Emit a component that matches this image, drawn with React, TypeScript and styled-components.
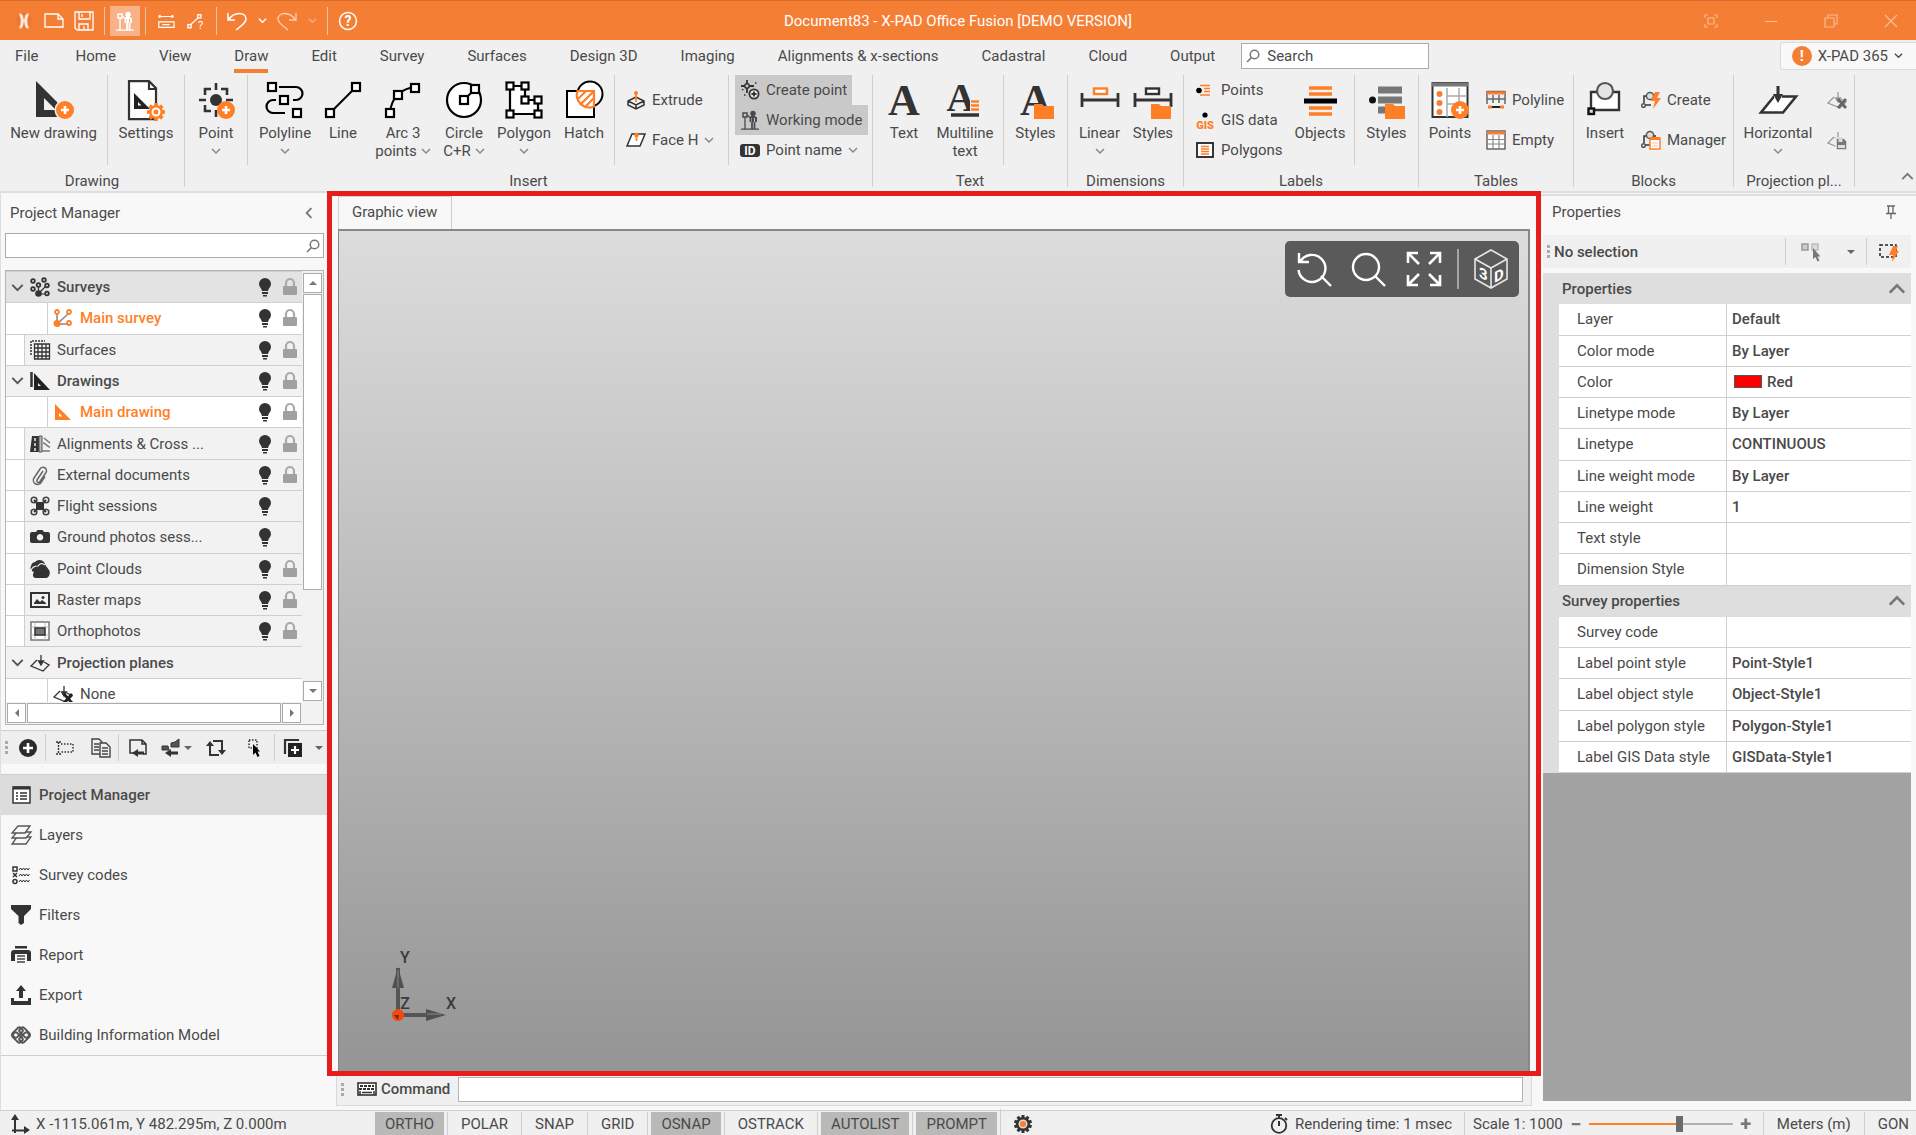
import React from 'react';
import styled, { createGlobalStyle, css } from 'styled-components';

const c = {
  orange: '#f57e35',
  accent: '#ff7f27',
  ink: '#333333',
  text: '#4a4a4a',
  line: '#cfcfcf',
  ribbon: '#f0f0f0',
  panel: '#f8f8f8',
  frame: '#e81c1c',
};

const GlobalStyle = createGlobalStyle`
  *, *::before, *::after { box-sizing: border-box; }
  body { margin: 0; overflow: hidden; }
  body, button, input, table {
    font-family: Roboto, "Liberation Sans", sans-serif;
    font-size: 15px;
    color: ${c.text};
  }
  button { border: 0; padding: 0; background: none; cursor: pointer; }
  svg { display: block; flex: none; overflow: visible; }
  svg text { font-family: inherit; }
`;

/* ---------- icons ---------- */

type IconProps = { size?: number; box?: number; children?: React.ReactNode };

const Svg = ({ size = 20, box = 20, children }: IconProps) => (
  <svg width={size} height={size} viewBox={`0 0 ${box} ${box}`} fill="none" stroke="currentColor" strokeWidth={1.5} aria-hidden="true">
    {children}
  </svg>
);

const Chevron = ({ size = 10, dir = 'down' }: { size?: number; dir?: 'down' | 'up' | 'left' }) => (
  <Svg size={size} box={10}>
    <path d={{ down: 'M1 3 5 7 9 3', up: 'M1 7 5 3 9 7', left: 'M7 1 3 5 7 9' }[dir]} />
  </Svg>
);

const Caret = ({ dir = 'down' }: { dir?: 'down' | 'up' | 'left' | 'right' }) => (
  <Svg size={8} box={8}>
    <path fill="currentColor" stroke="none" d={{ down: 'M0 2H8L4 6Z', up: 'M0 6H8L4 2Z', left: 'M6 0V8L2 4Z', right: 'M2 0V8L6 4Z' }[dir]} />
  </Svg>
);

const Magnifier = ({ size = 14 }: { size?: number }) => (
  <Svg size={size} box={14}>
    <circle cx="8.5" cy="5.5" r="4.3" />
    <path d="M5.4 8.6 1 13" />
  </Svg>
);

const Node = ({ x, y, s = 8 }: { x: number; y: number; s?: number }) => (
  <rect x={x - s / 2} y={y - s / 2} width={s} height={s} fill="#fff" stroke="#000" strokeWidth="2.2" />
);

const PlusBadge = ({ x = 31, y = 30 }: { x?: number; y?: number }) => (
  <g stroke="none">
    <circle cx={x} cy={y} r="9" fill={c.accent} />
    <path d={`M${x - 4} ${y}h8M${x} ${y - 4}v8`} stroke="#fff" strokeWidth="2.6" />
  </g>
);

const FolderBadge = () => <path d="M18 24h8l2 2h10v13H18z" fill={c.accent} stroke="none" />;

const Teeth = ({ x, y, r, w, n = 8, fill }: { x: number; y: number; r: number; w: number; n?: number; fill: string }) => (
  <g fill={fill} stroke="none">
    <circle cx={x} cy={y} r={r * 0.78} />
    {Array.from({ length: n }, (_, i) => (
      <rect key={i} x={x - w / 2} y={y - r} width={w} height={r} transform={`rotate(${(360 / n) * i} ${x} ${y})`} />
    ))}
  </g>
);

const Surveyor = () => (
  <>
    <circle cx="13" cy="3.4" r="2" fill="currentColor" />
    <path d="M13 6v6M10.5 7h5M10.5 7v5M16 7v5" strokeWidth="2" />
    <path d="M12 12v7M14.5 12v7" strokeWidth="1.8" />
    <rect x="3" y="3" width="4" height="4" />
    <path d="M5 7v12M7 5l4 3M1 19.2h18" strokeWidth="1.3" />
  </>
);

function SerifA({ x = 20, y = 35, size = 44 }: { x?: number; y?: number; size?: number }) {
  return (
    <text x={x} y={y} fontSize={size} fontWeight={700} textAnchor="middle" fill={c.ink} stroke="none" style={{ fontFamily: '"Liberation Serif", serif' }}>
      A
    </text>
  );
}

const BigIcons: Record<string, React.ReactNode> = {
  newDrawing: (
    <>
      <path d="M2 1 38 37H2zM10 18v12h12z" fill={c.ink} stroke="none" fillRule="evenodd" />
      <circle cx="31" cy="30" r="10.5" fill={c.ribbon} stroke="none" />
      <PlusBadge />
    </>
  ),
  settings: (
    <>
      <path d="M3 1.2h20l7 7v31H3z" fill="#fff" stroke={c.ink} strokeWidth="2.2" />
      <path d="M23 1v8h8" stroke={c.ink} strokeWidth="2.2" />
      <path d="M8 13 24 29H8zM12 22v3.5h3.5z" fill="#222" stroke="none" fillRule="evenodd" />
      <Teeth x={30} y={32} r={9} w={3.6} fill={c.accent} />
      <circle cx="30" cy="32" r="3.5" fill={c.accent} stroke="#fff" strokeWidth="2" />
    </>
  ),
  point: (
    <>
      <circle cx="20" cy="20" r="6" fill={c.ink} stroke="none" />
      <path d="M20 3v7M20 30v7M3 20h7M30 20h7M15 9h-6v6M25 9h6v6M15 31h-6v-6" stroke={c.ink} strokeWidth="2.6" />
      <PlusBadge x={30} />
    </>
  ),
  polyline: (
    <>
      <path d="M14 7h17a6 6 0 0 1 0 13h-3M20 33H8a6 6 0 0 1 0-13h3" stroke="#000" strokeWidth="2.2" />
      <Node x={7} y={7} /><Node x={19} y={20} /><Node x={32} y={33} />
    </>
  ),
  line: (
    <>
      <path d="M7 33 33 7" stroke="#000" strokeWidth="2" />
      <Node x={7} y={33} /><Node x={33} y={7} />
    </>
  ),
  arc: (
    <>
      <path d="M7 33C8 18 18 8 33 7" stroke="#000" strokeWidth="2" />
      <Node x={7} y={33} /><Node x={15} y={15} /><Node x={32} y={8} />
    </>
  ),
  circle: (
    <>
      <circle cx="20" cy="20" r="17" fill="#fff" stroke="#000" strokeWidth="2.2" />
      <path d="M20 20 31 9" stroke="#000" strokeWidth="2" />
      <Node x={20} y={20} /><Node x={31} y={9} />
    </>
  ),
  polygon: (
    <>
      <path d="M6 6h15v14h13v14H6z" fill="#fff" stroke="#000" strokeWidth="2.2" />
      <Node x={6} y={6} s={7} /><Node x={21} y={6} s={7} /><Node x={21} y={20} s={7} />
      <Node x={34} y={20} s={7} /><Node x={6} y={34} s={7} /><Node x={34} y={34} s={7} />
    </>
  ),
  hatch: (
    <>
      <circle cx="26" cy="14" r="12.5" fill="#fff" stroke="#000" strokeWidth="2" />
      <rect x="3" y="11" width="27" height="26" fill="#fff" stroke="#000" strokeWidth="2" />
      <path d="M13.5 11H30v15.5A12.5 12.5 0 0 1 13.5 11z" fill="#fff" stroke={c.accent} strokeWidth="2.2" />
      <path d="M14 19 22 11M16 25 29 12M21 27 30 18" stroke={c.accent} strokeWidth="2.2" />
    </>
  ),
  text: <SerifA />,
  multiline: (
    <>
      <SerifA x={16} y={31} size={40} />
      <path d="M25 20h9v12h-9z" fill={c.ribbon} stroke="none" />
      <path d="M6 35h28" stroke={c.ink} strokeWidth="3.5" />
      <path d="M26 21.5h8M26 25.5h8M26 29.5h8" stroke={c.accent} strokeWidth="2.4" />
    </>
  ),
  textStyles: (
    <>
      <SerifA />
      <FolderBadge />
    </>
  ),
  linear: (
    <>
      <path d="M2 20h36M2 13v14M38 13v14" stroke={c.ink} strokeWidth="2.8" />
      <rect x="14" y="8.5" width="13" height="5.5" fill="#fff" stroke={c.accent} strokeWidth="2.4" />
    </>
  ),
  dimStyles: (
    <>
      <path d="M2 20h36M2 13v14M38 13v14" stroke={c.ink} strokeWidth="2.8" />
      <rect x="13" y="8.5" width="13" height="5.5" fill="#fff" stroke={c.ink} strokeWidth="2.4" />
      <FolderBadge />
    </>
  ),
  objects: (
    <>
      <path d="M9 8h23M9 14h23M9 28h23M9 34h23" stroke={c.accent} strokeWidth="3.6" />
      <path d="M4 21h33" stroke="#000" strokeWidth="5" />
    </>
  ),
  labelStyles: (
    <>
      <circle cx="5.5" cy="20" r="3.5" fill="#111" stroke="none" />
      <path d="M11 10h24M11 20h24M11 30h8" stroke="#777" strokeWidth="7" />
      <FolderBadge />
    </>
  ),
  tablePoints: (
    <>
      <rect x="2.5" y="3" width="35" height="34" fill="#fff" stroke={c.ink} strokeWidth="2" />
      <path d="M2 4.5h36" stroke="#777" strokeWidth="4" />
      <path d="M17 8v29M17 16h20M17 24h20M29 8v20" stroke="#aaa" strokeWidth="1.5" />
      <g fill={c.orange} stroke="none"><circle cx="9.5" cy="14" r="3" /><circle cx="9.5" cy="23" r="3" /><circle cx="9.5" cy="32" r="3" /></g>
      <PlusBadge x={30} />
    </>
  ),
  blockInsert: (
    <>
      <path d="M6 12h28v18H6z" fill="#fff" stroke={c.ink} strokeWidth="2.4" />
      <circle cx="20" cy="11" r="8" fill="#e4e4e4" stroke="#555" strokeWidth="2.2" />
      <rect x="3.5" y="28.5" width="5.5" height="5.5" fill="#ddd" stroke="#111" strokeWidth="2.4" />
    </>
  ),
  horizontal: (
    <>
      <path d="M16 16.5h22L25 32.5H3z" fill="#fff" stroke={c.ink} strokeWidth="2.6" />
      <path d="M20 6v12" stroke={c.ribbon} strokeWidth="8" />
      <path d="M20 6v10" stroke={c.ink} strokeWidth="3" />
      <path d="M15 14h10l-5 9z" fill={c.ink} stroke="none" />
    </>
  ),
};

const Plane = ({ gray = false }: { gray?: boolean }) => (
  <g stroke={gray ? '#999' : c.ink} strokeWidth="1.3">
    <path d="M7 7 1 13l12 5 6-6-5-3" />
    <path d="M11 2v8M8.5 8l2.500 4 2.500-4z" fill="currentColor" />
  </g>
);

const SmallIcons: Record<string, React.ReactNode> = {
  extrude: (
    <>
      <path d="M10 7 2 11v4l8 4 8-4v-4zM2 11l8 4 8-4M10 15v4" stroke={c.ink} />
      <path d="M10 3v9" stroke={c.accent} strokeWidth="1.8" />
      <circle cx="10" cy="3" r="2" fill={c.accent} stroke="none" />
    </>
  ),
  face: (
    <>
      <path d="M6 4h13l-5 12H1z" fill="#fff" stroke={c.ink} />
      <path d="M10.5 3v8" stroke={c.accent} strokeWidth="1.8" />
      <circle cx="10.5" cy="5" r="2.3" fill={c.accent} stroke="none" />
    </>
  ),
  createPoint: (
    <>
      <path d="M7 0v4M7 8v5M1 6h4M9 6h5" stroke={c.ink} strokeWidth="1.8" />
      <circle cx="7" cy="6" r="2.2" stroke={c.ink} />
      <path d="M2 10l2-1M15 3h2M4 15h3" strokeDasharray="1.5 1.5" stroke={c.ink} />
      <circle cx="14" cy="14" r="4.6" fill="#e4e4e4" stroke={c.ink} strokeWidth="1.8" />
      <path d="M11.5 14h5M14 11.5v5" stroke={c.ink} strokeWidth="1.8" />
    </>
  ),
  working: <Surveyor />,
  id: (
    <>
      <rect x="0" y="4" width="20" height="13" rx="3" fill={c.ink} stroke="none" />
      <text x="10" y="15" fontSize="12" fontWeight={700} textAnchor="middle" fill="#fff" stroke="none">ID</text>
    </>
  ),
  labelPoints: (
    <>
      <circle cx="4" cy="10.5" r="2.8" fill="#000" stroke="none" />
      <path d="M5 5.5h10M9 8.5h6M9 11.5h6M5 15h10" stroke={c.accent} strokeWidth="1.6" />
    </>
  ),
  gis: (
    <>
      <circle cx="10" cy="5" r="2.6" fill="#000" stroke="none" />
      <text x="10" y="19" fontSize="11" fontWeight={900} textAnchor="middle" fill={c.accent} stroke="none">GIS</text>
    </>
  ),
  labelPolygons: (
    <>
      <rect x="2" y="3" width="16" height="14" fill="#fff" stroke="#222" strokeWidth="1.8" />
      <path d="M6 6.5h8M6 9h8M6 11.5h8M6 14h8" stroke={c.accent} strokeWidth="1.4" />
    </>
  ),
  tablePolyline: (
    <>
      <path d="M1 14V1.5h18V14M7 5v8M13 5v8M1 9h18" stroke="#666" />
      <path d="M1 3h18" stroke={c.orange} strokeWidth="3" />
      <path d="M5 17h10" stroke="#222" strokeWidth="2" />
      <path d="M2 17h4M14 17h4" stroke={c.orange} strokeWidth="3" />
    </>
  ),
  tableEmpty: (
    <>
      <rect x="1" y="1" width="18" height="18" fill="#fff" stroke="#666" />
      <path d="M7 5v14M13 5v14M1 9.5h18M1 14h18" stroke="#888" strokeWidth="1.2" />
      <path d="M1 3h18" stroke={c.orange} strokeWidth="3" />
    </>
  ),
  blockCreate: (
    <>
      <path d="M3 13V6h12M3 15h7" stroke={c.ink} />
      <circle cx="9" cy="6" r="3.6" fill="#ddd" stroke="#555" />
      <circle cx="2.5" cy="15.5" r="1.8" fill="#fff" stroke="#555" />
      <path d="M14 2h5l-3 6h4L12 19l2-8h-4z" fill={c.accent} stroke="none" />
    </>
  ),
  blockManager: (
    <>
      <path d="M3 13V6h12M3 15h7" stroke={c.ink} />
      <circle cx="9" cy="5" r="3.6" fill="#ddd" stroke="#555" />
      <circle cx="2.5" cy="15.5" r="1.8" fill="#fff" stroke="#555" />
      <rect x="9" y="8" width="10" height="11" fill="#fff" stroke={c.accent} />
      <path d="M9 8.5h10" stroke={c.accent} strokeWidth="3" />
      <path d="M11 13h6M11 16h6" stroke="#f9c49d" strokeWidth="1" />
    </>
  ),
  planeDelete: (
    <>
      <g color="#999"><Plane gray /></g>
      <path d="M11 9l8 9M19 9l-8 9" stroke="#666" strokeWidth="2.8" />
    </>
  ),
  planeSave: (
    <>
      <g color="#999"><Plane gray /></g>
      <path d="M9 8h8l3 3v9H9z" fill="#777" stroke={c.ribbon} />
      <path d="M11.5 9h4v3h-4zM11 15h7v3h-7z" fill="#ddd" stroke="none" />
    </>
  ),
  surveys: (
    <g strokeWidth="1.8" stroke={c.ink}>
      <circle cx="3" cy="4" r="1.8" /><circle cx="14" cy="3" r="1.8" /><circle cx="3" cy="12" r="1.8" />
      <circle cx="8.5" cy="8" r="1.8" /><circle cx="17" cy="8.5" r="1.8" />
      <circle cx="8.5" cy="16.5" r="2.4" fill={c.ink} /><circle cx="17" cy="16.5" r="1.8" />
      <path d="M8.5 9v6M10 15l6-6M10 17h6" strokeWidth="1.2" />
    </g>
  ),
  mainSurvey: (
    <g stroke={c.accent} strokeWidth="1.8">
      <path d="M4 5v11l11-10M4 16h11" stroke="#888" strokeWidth="1.5" />
      <circle cx="4" cy="4" r="2" fill="#fff" /><circle cx="16" cy="4" r="2" fill="#fff" /><circle cx="16" cy="15" r="2" fill="#fff" />
      <circle cx="4" cy="15.5" r="2.6" fill={c.accent} />
    </g>
  ),
  surfaces: (
    <>
      <path d="M1 15V1h14" stroke={c.ink} strokeDasharray="2 1" />
      <path d="M4.5 4h15v15h-15zM8 4v15M12 4v15M16 4v15M4 8h15M4 12h15M4 16h15" stroke={c.ink} strokeWidth="1.3" />
    </>
  ),
  drawings: (
    <>
      <path d="M1.5 1v15" stroke={c.ink} strokeWidth="2.5" />
      <path d="M4 2 20 19H4zM8 12v3h3z" fill="#222" stroke="none" fillRule="evenodd" />
    </>
  ),
  mainDrawing: <path d="M2 2 18 18H2zM6 11v3.5h3.5z" fill={c.accent} stroke="none" fillRule="evenodd" />,
  alignments: (
    <>
      <path d="M2 2h7v16H0z" fill={c.ink} stroke="none" />
      <path d="M5 4v13" stroke="#eee" strokeDasharray="3 2" />
      <path d="M9 2h3v16H9z" fill="#bbb" stroke="#555" strokeWidth="1" />
      <path d="M14 4l6 5M13 9c3 0 4 4 7 4M12 17h8" stroke="#777" />
    </>
  ),
  clip: <path d="M13 6 7 15a1.5 1.5 0 0 0 3 1.5l6-9A3.3 3.3 0 0 0 10 4L4 13a4 4 0 0 0 7 4.5l4-6" stroke="#666" strokeWidth="1.5" />,
  drone: (
    <>
      <rect x="6" y="6" width="8" height="8" fill={c.ink} stroke="none" />
      <path d="M4 4l12 12M16 4 4 16" stroke={c.ink} strokeWidth="2" />
      <g stroke="#444" strokeWidth="1.6"><circle cx="4" cy="4" r="2.8" /><circle cx="16" cy="4" r="2.8" /><circle cx="4" cy="16" r="2.8" /><circle cx="16" cy="16" r="2.8" /></g>
    </>
  ),
  camera: <path d="M2 5h4l1.5-2h5L14 5h4a2 2 0 0 1 2 2v7a2 2 0 0 1-2 2H2a2 2 0 0 1-2-2V7a2 2 0 0 1 2-2zM10 7a3.3 3.3 0 1 0 .01 0z" fill={c.ink} stroke="none" fillRule="evenodd" />,
  cloud: (
    <>
      <path d="M4 13A4 4 0 0 1 1 7a5 5 0 0 1 4-4 6 6 0 0 1 9 0l2 4 3 4c2 3 0 8-3 8H6c-3 0-4-3-2-6z" fill={c.ink} stroke="none" />
      <path d="M1 12c1-5 5-5 7-5 2-3 5-3 7-1" stroke="#f2f2f2" strokeWidth="1.2" />
    </>
  ),
  raster: (
    <>
      <rect x="1" y="3" width="18" height="14" stroke={c.ink} strokeWidth="2" />
      <path d="M4 14v-1l3-4 3 3 2-2 4 3v1z" fill={c.ink} stroke="none" /><circle cx="13" cy="7.5" r="1.5" fill={c.ink} stroke="none" />
    </>
  ),
  ortho: (
    <>
      <rect x="1" y="1" width="18" height="18" fill="#fff" stroke="#777" />
      <path d="M5 1v18M15 1v18M1 6h18M1 14h18" stroke="#bbb" strokeWidth="1" />
      <rect x="5" y="7" width="10" height="7" fill="#777" stroke={c.ink} />
    </>
  ),
  plane: <Plane />,
  none: (
    <>
      <Plane />
      <path d="M11 10l8 9M19 10l-8 9" stroke="#222" strokeWidth="2.8" />
    </>
  ),
  bulb: <path d="M10 1a6 6 0 0 0-6 6c0 3 2.5 4 3 7h6c.5-3 3-4 3-7a6 6 0 0 0-6-6zM7 15h6v2H7zM8 18h4v1.500H8z" fill={c.ink} stroke="none" />,
  lock: (
    <>
      <path d="M6 9V6a4 4 0 0 1 8 0v3" stroke="#aaa" strokeWidth="2.2" />
      <rect x="3" y="9" width="14" height="9" rx="1" fill="#a0a0a0" stroke="none" />
    </>
  ),
  add: (
    <>
      <circle cx="10" cy="10" r="9" fill="#2b2b2b" stroke="none" />
      <path d="M5 10h10M10 5v10" stroke="#fff" strokeWidth="2.6" />
    </>
  ),
  rename: (
    <>
      <path d="M1 4h5M3.5 4v12M1 16h5" stroke={c.ink} strokeWidth="1.4" strokeDasharray="2 1" />
      <path d="M6 6h12v8H6" stroke={c.ink} strokeDasharray="1.5 1.5" />
    </>
  ),
  copy: (
    <>
      <path d="M1 1h7l3 3v12H1zM3 6h5M3 9h5M3 12h5" stroke="#444" strokeWidth="1.4" />
      <path d="M9 5h6l4 4v10H9z" fill="#f0f0f0" stroke="#444" strokeWidth="1.4" />
      <path d="M11 10h6M11 13h6M11 16h6" stroke="#444" strokeWidth="1.4" />
    </>
  ),
  importDoc: (
    <>
      <path d="M6 15H2V2h12l4 4v10h-3M14 2v4h4" stroke="#333" />
      <path d="M4 15l6-4v2.500h6v3h-6V19z" fill={c.ink} stroke="none" />
    </>
  ),
  importAll: (
    <>
      <path d="M1 8h6l1 4H1zM10 5l4-1 4-3v8h-8z" fill="#555" stroke={c.ink} strokeWidth="1" />
      <path d="M4 15l6-4v2.500h7v3h-7V19z" fill={c.ink} stroke="none" />
    </>
  ),
  swap: (
    <>
      <path d="M4 6v11h9M16 14V3H7" stroke={c.ink} strokeWidth="2" />
      <path d="M0 8h8L4 3zM12 12h8l-4 5z" fill={c.ink} stroke="none" />
    </>
  ),
  pick: (
    <>
      <rect x="4" y="2" width="8" height="8" stroke={c.ink} strokeDasharray="1.5 1.5" />
      <path d="M8 6v11l2.500-2.500L12.500 19l2-1-2-4.500H15z" fill="#000" stroke="none" />
    </>
  ),
  duplicate: (
    <>
      <path d="M2 16V2h14" stroke={c.ink} strokeWidth="2.2" />
      <rect x="5" y="5" width="14" height="14" fill="#222" stroke="none" />
      <path d="M8 12h8M12 8v8" stroke="#fff" strokeWidth="2.2" />
    </>
  ),
  manager: (
    <>
      <rect x="2" y="2" width="17" height="16" fill="#fff" stroke={c.ink} />
      <path d="M2 3h17" stroke={c.ink} strokeWidth="3" />
      <path d="M5 8h2M5 11h2M5 14h2M9 8h7M9 11h7M9 14h7" stroke={c.ink} />
    </>
  ),
  layers: (
    <g fill={c.panel} stroke="#555" strokeWidth="1.3">
      <path d="M6 12h14l-5 7H1z" /><path d="M6 7h14l-5 6H1z" /><path d="M7 1h12l-5 7H1z" />
    </g>
  ),
  codes: (
    <>
      <rect x="2" y="2" width="4" height="4" stroke={c.ink} /><path d="M2 8l4 4M6 8l-4 4" stroke={c.ink} /><circle cx="4" cy="16.5" r="2" stroke={c.ink} />
      <path d="M8 5l1.500-2 1.500 2 1.500-2 1.500 2 1.500-2 1.500 2 1.500-2M8 11l1.500-2 1.500 2 1.500-2 1.500 2 1.500-2 1.500 2 1.500-2M8 17l1.500-2 1.500 2 1.500-2 1.500 2 1.500-2 1.500 2 1.500-2" stroke={c.ink} strokeWidth="1" />
    </>
  ),
  filter: <path d="M0 0h20v4l-7 7v7l-3 2-2.500-2v-7L0 4z" fill={c.ink} stroke="none" />,
  report: (
    <>
      <path d="M4 1h12v2.500H4zM3 5h14a3 3 0 0 1 3 3v8h-4V9H4v7H0V8a3 3 0 0 1 3-3z" fill={c.ink} stroke="none" />
      <path d="M6 11h8M6 14h8M6 17h8" stroke="#444" strokeWidth="1.3" />
    </>
  ),
  exportUp: <path d="M10 0l5 6h-3v7H8V6H5zM0 13h3v3h14v-3h3v7H0z" fill={c.ink} stroke="none" />,
  bim: (
    <g stroke="#555" strokeWidth="2">
      <rect x="3.500" y="2" width="6" height="11" rx="2" transform="rotate(45 6.500 7.500)" /><rect x="10.500" y="2" width="6" height="11" rx="2" transform="rotate(-45 13.500 7.500)" />
      <rect x="3.500" y="7" width="6" height="11" rx="2" transform="rotate(-45 6.500 12.500)" /><rect x="10.500" y="7" width="6" height="11" rx="2" transform="rotate(45 13.500 12.500)" />
    </g>
  ),
  newDoc: <path d="M1 3h13l5 5v8H1zM14 3v5h5" stroke="#fff" strokeWidth="1.3" />,
  save: <path d="M1 1h18v18H3l-2-2zM5 1v7h11V1M5 19v-6h9v6M10 19v-4M8 3v3" stroke="#fff" strokeWidth="1.3" />,
  measure: (
    <>
      <path d="M3 5h14M2 11h17v6H2zM6 14h8" stroke="#fff" strokeWidth="1.3" />
      <circle cx="3" cy="5" r="1.6" fill="#fff" stroke="none" /><circle cx="17" cy="5" r="1.6" fill="#fff" stroke="none" />
    </>
  ),
  query: (
    <>
      <path d="M3 15 14 5" stroke="#fff" strokeWidth="1.3" /><rect x="1" y="14" width="3.5" height="3.5" fill={c.orange} stroke="#fff" /><rect x="12" y="3" width="3.5" height="3.5" fill={c.orange} stroke="#fff" />
      <text x="15" y="19" fontSize="13" textAnchor="middle" fill="#fff" stroke="none">?</text>
    </>
  ),
  undo: <path d="M1 2v7h7M1.5 9C7 0 19 1 19 8c0 4-4 6-10 11" stroke="#fff" strokeWidth="1.5" />,
  redo: <path d="M19 2v7h-7M18.5 9C13 0 1 1 1 8c0 4 4 6 10 11" stroke="#fbd0b0" strokeWidth="1.3" />,
  help: (
    <>
      <circle cx="10" cy="10" r="8.5" stroke="#fff" />
      <text x="10" y="15" fontSize="14" fontWeight={700} textAnchor="middle" fill="#fff" stroke="none">?</text>
    </>
  ),
  logo: (
    <>
      <circle cx="10" cy="10" r="9" fill="#e67a35" stroke="none" />
      <path d="M5 3c2 0 3 3 3 7s-1 7-3 7M15 3c-2 0-3 3-3 7s1 7 3 7" stroke="#fde6d6" strokeWidth="3.4" />
      <path d="M8 10h4" stroke="#fde6d6" strokeWidth="2" />
    </>
  ),
  keyboard: (
    <>
      <rect x="1" y="4" width="18" height="12" fill="#fff" stroke={c.ink} strokeWidth="1.6" />
      <path d="M3 7h14M2 10h16" stroke={c.ink} strokeWidth="2.2" strokeDasharray="3 1" /><path d="M5 13.5h10M3 12v4M17 12v4" stroke={c.ink} />
    </>
  ),
  axes: (
    <>
      <path d="M5 19V3M2 16.5h16" stroke={c.ink} strokeWidth="2" />
      <path d="M1 6l4-6 4 6zM14 12l6 4-6 4z" fill={c.ink} stroke="none" />
    </>
  ),
  gear: (
    <>
      <Teeth x={10} y={10} r={9} w={3} n={10} fill="#333" />
      <circle cx="10" cy="10" r="3.8" fill={c.accent} stroke="#ddd" />
    </>
  ),
  timer: (
    <>
      <circle cx="10" cy="11.5" r="7.3" stroke={c.ink} strokeWidth="1.8" />
      <path d="M7 1h6M10 1v3M10 7v5M16 4l2 2" stroke={c.ink} strokeWidth="2" />
    </>
  ),
  selectMany: (
    <>
      <rect x="1" y="2" width="6" height="6" stroke="#999" fill="#ccc" /><rect x="11" y="2" width="6" height="6" stroke="#bbb" fill="#ddd" />
      <path d="M12 6v11l2.500-2 2 4.500 2-1-2-4h3z" fill="#777" stroke="none" />
    </>
  ),
  quickSelect: (
    <>
      <rect x="1" y="3" width="16" height="12" stroke="#222" strokeDasharray="3 2" fill="#eee" />
      <path d="M14 4h5l-2 5h3l-7 11 1-7h-4z" fill={c.accent} stroke="none" />
    </>
  ),
  pin: <path d="M6 4h8M7.5 4v7M12 4v7M5 11.5h10M10 12v5" stroke="#666" strokeWidth="1.3" />,
  focus: <path d="M4 7V4h3M13 4h3v3M16 13v3h-3M7 16H4v-3M7 7h6v6H7z" strokeWidth="1.2" />,
  minimize: <path d="M4 10.5h12" strokeWidth="1.2" />,
  restore: <path d="M4 7h9v9H4zM7 7V4h9v9h-3" strokeWidth="1.2" />,
  close: <path d="M4 4l12 12M16 4 4 16" strokeWidth="1.4" />,
};

const Small = ({ name, size = 20 }: { name: string; size?: number }) => <Svg size={size}>{SmallIcons[name]}</Svg>;
const Big = ({ name }: { name: string }) => <Svg size={40} box={40}>{BigIcons[name]}</Svg>;

/* ---------- shell ---------- */

const Shell = styled.div`
  display: flex;
  flex-direction: column;
  height: 100vh;
  background: ${c.panel};
`;

const TitleBar = styled.header`
  display: grid;
  grid-template-columns: 1fr auto 1fr;
  align-items: center;
  height: 40px;
  flex: none;
  background: ${c.orange};
  border-top: 1px solid #d96c2c;
  color: #fff;
`;
const QuickBar = styled.div`
  display: flex;
  align-items: center;
  padding-left: 9px;
`;
const QuickButton = styled.button<{ $active?: boolean; $narrow?: boolean; $dim?: boolean }>`
  display: grid;
  place-items: center;
  width: ${p => (p.$narrow ? 20 : 30)}px;
  height: 30px;
  color: #fff;
  opacity: ${p => (p.$dim ? 0.35 : 1)};
  background: ${p => (p.$active ? '#f8b288' : 'none')};
`;
const QuickDivider = styled.span`
  width: 1px;
  height: 28px;
  margin: 0 5px;
  background: #e9c3a9;
`;
const Title = styled.h1`
  margin: 0;
  font-size: 15px;
  font-weight: 400;
`;
const WindowButtons = styled.div`
  display: flex;
  justify-content: flex-end;
  gap: 10px;
`;
const WindowButton = styled.button`
  display: grid;
  place-items: center;
  width: 50px;
  height: 30px;
  color: #fab98f;
`;

const TabBar = styled.nav`
  display: flex;
  align-items: center;
  height: 35px;
  flex: none;
  padding-left: 15px;
  background: ${c.ribbon};
`;
const TabList = styled.div`
  display: flex;
  gap: 43px;
  margin-right: 26px;
`;
const Tab = styled.button<{ $active?: boolean }>`
  height: 30px;
  line-height: 24px;
  border-bottom: 4px solid ${p => (p.$active ? c.orange : 'transparent')};
  white-space: nowrap;
`;
const FileTab = styled(Tab)`
  margin-right: -6px;
`;
const SearchBox = styled.label`
  display: flex;
  align-items: center;
  gap: 7px;
  width: 188px;
  height: 26px;
  margin-bottom: 4px;
  padding-left: 4px;
  background: #fff;
  border: 1px solid #ababab;
  color: #777;
`;
const SearchInput = styled.input`
  flex: 1;
  min-width: 0;
  height: 22px;
  padding: 0;
  border: 0;
  outline: 0;
  background: none;
  &::placeholder { color: ${c.text}; opacity: 1; }
`;
const Account = styled.button`
  display: flex;
  align-items: center;
  gap: 6px;
  height: 28px;
  margin: 0 0 4px auto;
  padding: 0 13px 0 11px;
  background: ${c.panel};
  border: 1px solid #dadada;
  border-right: 0;
  border-radius: 3px 0 0 3px;
`;
const AccountAlert = styled.span`
  display: grid;
  place-items: center;
  width: 20px;
  height: 20px;
  border-radius: 50%;
  background: ${c.orange};
  color: #fff;
  font-weight: 700;
`;

/* ---------- ribbon ---------- */

const RibbonBar = styled.div`
  display: flex;
  height: 116px;
  flex: none;
  background: ${c.ribbon};
`;
const Group = styled.section`
  display: flex;
  flex-direction: column;
  height: 112px;
  border-right: 1px solid ${c.line};
`;
const GroupBody = styled.div`
  display: flex;
  height: 90px;
  flex: none;
`;
const GroupLabel = styled.div`
  padding-top: 5px;
  line-height: 22px;
  text-align: center;
  white-space: nowrap;
`;
const Section = styled.div<{ $pad?: string }>`
  display: flex;
  padding: ${p => p.$pad || '0'};
  &:not(:last-child) { border-right: 1px solid ${c.line}; }
`;
const BigBtn = styled.button<{ $w: number }>`
  display: flex;
  flex-direction: column;
  align-items: center;
  width: ${p => p.$w}px;
  padding-top: 5px;
  line-height: 18px;
`;
const BigLabel = styled.span`
  margin-top: 4px;
  text-align: center;
  white-space: pre;
`;
const DropMark = styled.span<{ $place: 'below' | 'inline' | 'beside' }>`
  display: ${p => (p.$place === 'inline' ? 'inline-block' : 'block')};
  margin: ${p => ({ below: '4px 0 0', inline: '0 0 0 4px', beside: '0' }[p.$place])};
  color: #888;
`;
const SmallColumn = styled.div<{ $w: number }>`
  display: flex;
  flex-direction: column;
  justify-content: center;
  align-items: flex-start;
  width: ${p => p.$w}px;
`;
const SmallBtn = styled.button<{ $tall?: boolean; $on?: boolean }>`
  display: flex;
  align-items: center;
  gap: 6px;
  height: ${p => (p.$tall ? 40 : 30)}px;
  padding: 0 5px;
  white-space: nowrap;
  background: ${p => (p.$on ? '#c9c9c9' : 'none')};
`;
const CollapseRibbon = styled.button`
  align-self: flex-end;
  margin-left: auto;
  padding: 0 2px 8px 0;
  color: #777;
`;

type BigDef = { icon: string; label: string; w: number; drop?: 'below' | 'inline' };
const BigButton = ({ icon, label, w, drop }: BigDef) => (
  <BigBtn $w={w}>
    <Big name={icon} />
    <BigLabel>
      {label}
      {drop === 'inline' && <DropMark $place="inline"><Chevron /></DropMark>}
    </BigLabel>
    {drop === 'below' && <DropMark $place="below"><Chevron /></DropMark>}
  </BigBtn>
);

type SmallDef = { icon: string; label?: string; drop?: boolean; on?: boolean; title?: string };
const SmallButtons = ({ w, items }: { w: number; items: SmallDef[] }) => (
  <SmallColumn $w={w}>
    {items.map(i => (
      <SmallBtn key={i.icon} $tall={items.length === 2} $on={i.on} aria-label={i.title}>
        <Small name={i.icon} />
        {i.label}
        {i.drop && <DropMark $place="beside"><Chevron /></DropMark>}
      </SmallBtn>
    ))}
  </SmallColumn>
);

const Ribbon = () => (
  <RibbonBar>
    <Group>
      <GroupBody>
        <Section><BigButton icon="newDrawing" label="New drawing" w={107} /></Section>
        <Section><BigButton icon="settings" label="Settings" w={76} /></Section>
      </GroupBody>
      <GroupLabel>Drawing</GroupLabel>
    </Group>
    <Group>
      <GroupBody>
        <Section><BigButton icon="point" label="Point" w={62} drop="below" /></Section>
        <Section $pad="0 8px 0 0">
          <BigButton icon="polyline" label="Polyline" w={74} drop="below" />
          <BigButton icon="line" label="Line" w={42} />
          <BigButton icon="arc" label={'Arc 3\npoints'} w={78} drop="inline" />
          <BigButton icon="circle" label={'Circle\nC+R'} w={44} drop="inline" />
          <BigButton icon="polygon" label="Polygon" w={76} drop="below" />
          <BigButton icon="hatch" label="Hatch" w={44} />
        </Section>
        <Section $pad="0 0 0 6px">
          <SmallButtons w={107} items={[{ icon: 'extrude', label: 'Extrude' }, { icon: 'face', label: 'Face H', drop: true }]} />
        </Section>
        <Section $pad="0 0 0 6px">
          <SmallButtons w={137} items={[
            { icon: 'createPoint', label: 'Create point', on: true },
            { icon: 'working', label: 'Working mode', on: true },
            { icon: 'id', label: 'Point name', drop: true },
          ]} />
        </Section>
      </GroupBody>
      <GroupLabel>Insert</GroupLabel>
    </Group>
    <Group>
      <GroupBody>
        <Section $pad="0 8px 0 0">
          <BigButton icon="text" label="Text" w={62} />
          <BigButton icon="multiline" label={'Multiline\ntext'} w={60} />
        </Section>
        <Section><BigButton icon="textStyles" label="Styles" w={63} /></Section>
      </GroupBody>
      <GroupLabel>Text</GroupLabel>
    </Group>
    <Group>
      <GroupBody>
        <Section $pad="0 8px 0 0">
          <BigButton icon="linear" label="Linear" w={63} drop="below" />
          <BigButton icon="dimStyles" label="Styles" w={44} />
        </Section>
      </GroupBody>
      <GroupLabel>Dimensions</GroupLabel>
    </Group>
    <Group>
      <GroupBody>
        <Section $pad="0 4px 0 6px">
          <SmallButtons w={100} items={[
            { icon: 'labelPoints', label: 'Points' },
            { icon: 'gis', label: 'GIS data' },
            { icon: 'labelPolygons', label: 'Polygons' },
          ]} />
          <BigButton icon="objects" label="Objects" w={60} />
        </Section>
        <Section><BigButton icon="labelStyles" label="Styles" w={63} /></Section>
      </GroupBody>
      <GroupLabel>Labels</GroupLabel>
    </Group>
    <Group>
      <GroupBody>
        <Section>
          <BigButton icon="tablePoints" label="Points" w={62} />
          <SmallButtons w={92} items={[{ icon: 'tablePolyline', label: 'Polyline' }, { icon: 'tableEmpty', label: 'Empty' }]} />
        </Section>
      </GroupBody>
      <GroupLabel>Tables</GroupLabel>
    </Group>
    <Group>
      <GroupBody>
        <Section>
          <BigButton icon="blockInsert" label="Insert" w={62} />
          <SmallButtons w={97} items={[{ icon: 'blockCreate', label: 'Create' }, { icon: 'blockManager', label: 'Manager' }]} />
        </Section>
      </GroupBody>
      <GroupLabel>Blocks</GroupLabel>
    </Group>
    <Group>
      <GroupBody>
        <Section>
          <BigButton icon="horizontal" label="Horizontal" w={88} drop="below" />
          <SmallButtons w={32} items={[{ icon: 'planeDelete', title: 'Remove plane' }, { icon: 'planeSave', title: 'Save plane' }]} />
        </Section>
      </GroupBody>
      <GroupLabel>Projection pl...</GroupLabel>
    </Group>
    <CollapseRibbon aria-label="Collapse ribbon"><Chevron size={13} dir="up" /></CollapseRibbon>
  </RibbonBar>
);

/* ---------- left panel ---------- */

const Body = styled.div`
  display: flex;
  flex: 1;
  min-height: 0;
`;
const LeftPanel = styled.aside`
  display: flex;
  flex-direction: column;
  width: 327px;
  flex: none;
  border-top: 2px solid #dedede;
  border-left: 1px solid #dedede;
`;
const PanelHead = styled.div`
  display: flex;
  align-items: center;
  justify-content: space-between;
  height: 40px;
  padding: 0 12px 0 9px;
  color: ${c.text};
`;
const PlainButton = styled.button`
  display: grid;
  place-items: center;
  color: #777;
`;
const TreeSearch = styled(SearchBox)`
  width: auto;
  height: 25px;
  margin: 0 3px 12px 4px;
  padding: 0 3px;
`;
const TreeBox = styled.div`
  display: grid;
  grid-template-columns: 1fr 21px;
  grid-template-rows: 431px 22px;
  margin: 0 3px 5px 4px;
  border: 1px solid #b4b4b4;
  background: #f2f2f2;
`;
const TreeView = styled.div`
  overflow: hidden;
  border-top: 1px solid ${c.line};
`;
const TreeRows = styled.div`
  display: grid;
  grid-auto-rows: 1fr;
  height: 438px;
`;
const Row = styled.div<{ $kind: 'leaf' | 'parent' | 'child'; $selected?: boolean }>`
  display: grid;
  grid-template-columns: ${p => (p.$kind === 'child' ? 42 : 19)}px 20px 1fr 20px 20px;
  column-gap: 5px;
  align-items: center;
  padding-right: 2px;
  border-bottom: 1px solid ${c.line};
  background: ${p => (p.$selected ? '#e3e3e3' : p.$kind === 'child' ? '#fff' : '#f2f2f2')};
  font-weight: ${p => (p.$kind === 'parent' ? 500 : 400)};
`;
const Gutter = styled.span<{ $lined?: boolean }>`
  display: grid;
  place-items: center;
  align-self: stretch;
  padding-left: 4px;
  color: #555;
  ${p => p.$lined && css`
    background: #fff;
    border-right: 1px solid ${c.line};
  `}
`;
const RowText = styled.span<{ $hot?: boolean }>`
  padding-left: 2px;
  white-space: nowrap;
  ${p => p.$hot && css`
    color: ${c.accent};
    font-weight: 500;
  `}
`;
const ScrollTrack = styled.div<{ $horizontal?: boolean }>`
  display: flex;
  flex-direction: ${p => (p.$horizontal ? 'row' : 'column')};
  gap: 1px;
  padding: ${p => (p.$horizontal ? '1px' : '2px 1px 1px')};
`;
const ScrollButton = styled(PlainButton)`
  width: 19px;
  height: 20px;
  flex: none;
  background: #fff;
  border: 1px solid #ababab;
`;
const ScrollThumb = styled.div<{ $grow: number }>`
  flex: ${p => p.$grow};
  background: #fff;
  border: 1px solid #ababab;
`;
const ScrollGap = styled.div<{ $grow: number }>`
  flex: ${p => p.$grow};
`;
const TreeTools = styled.div`
  display: flex;
  align-items: center;
  height: 34px;
  flex: none;
  background: #eeeeee;
  border-top: 1px solid ${c.line};
`;
const Tool = styled.button<{ $w?: number }>`
  display: flex;
  align-items: center;
  justify-content: center;
  gap: 3px;
  width: ${p => p.$w || 33}px;
  height: 30px;
  color: #666;
`;
const ToolDivider = styled.span`
  width: 1px;
  height: 27px;
  background: ${c.line};
`;
const Grip = styled.span`
  width: 3px;
  height: 13px;
  margin: 0 4px;
  background: repeating-linear-gradient(#aaa 0 3px, transparent 3px 5px);
`;
const NavList = styled.nav`
  display: flex;
  flex-direction: column;
  margin-top: 10px;
  border-top: 1px solid ${c.line};
  border-bottom: 1px solid ${c.line};
`;
const NavItem = styled.button<{ $active?: boolean }>`
  display: flex;
  align-items: center;
  gap: 8px;
  height: 40px;
  padding-left: 10px;
  background: ${p => (p.$active ? '#dcdcdc' : 'none')};
  font-weight: ${p => (p.$active ? 500 : 400)};
`;

type TreeRow = { label: string; icon: string; kind?: 'parent' | 'child'; selected?: boolean; hot?: boolean; bulb?: boolean; lock?: boolean };
const tree: TreeRow[] = [
  { label: 'Surveys', icon: 'surveys', kind: 'parent', selected: true },
  { label: 'Main survey', icon: 'mainSurvey', kind: 'child', hot: true },
  { label: 'Surfaces', icon: 'surfaces' },
  { label: 'Drawings', icon: 'drawings', kind: 'parent' },
  { label: 'Main drawing', icon: 'mainDrawing', kind: 'child', hot: true },
  { label: 'Alignments & Cross ...', icon: 'alignments' },
  { label: 'External documents', icon: 'clip' },
  { label: 'Flight sessions', icon: 'drone', lock: false },
  { label: 'Ground photos sess...', icon: 'camera', lock: false },
  { label: 'Point Clouds', icon: 'cloud' },
  { label: 'Raster maps', icon: 'raster' },
  { label: 'Orthophotos', icon: 'ortho' },
  { label: 'Projection planes', icon: 'plane', kind: 'parent', bulb: false, lock: false },
  { label: 'None', icon: 'none', kind: 'child', bulb: false, lock: false },
];

const nav = [
  ['manager', 'Project Manager'],
  ['layers', 'Layers'],
  ['codes', 'Survey codes'],
  ['filter', 'Filters'],
  ['report', 'Report'],
  ['exportUp', 'Export'],
  ['bim', 'Building Information Model'],
];

const ProjectPanel = () => (
  <LeftPanel>
    <PanelHead>
      Project Manager
      <PlainButton aria-label="Collapse panel"><Chevron size={12} dir="left" /></PlainButton>
    </PanelHead>
    <TreeSearch>
      <SearchInput aria-label="Search the project" />
      <Magnifier />
    </TreeSearch>
    <TreeBox>
      <TreeView>
        <TreeRows role="tree">
          {tree.map(r => (
            <Row key={r.label} role="treeitem" $kind={r.kind || 'leaf'} $selected={r.selected}>
              <Gutter $lined={r.kind !== 'parent'}>{r.kind === 'parent' && <Chevron size={13} />}</Gutter>
              <Small name={r.icon} />
              <RowText $hot={r.hot}>{r.label}</RowText>
              {r.bulb === false ? <span /> : <PlainButton aria-label={`Show ${r.label}`}><Small name="bulb" /></PlainButton>}
              {r.lock === false ? <span /> : <PlainButton aria-label={`Lock ${r.label}`}><Small name="lock" /></PlainButton>}
            </Row>
          ))}
        </TreeRows>
      </TreeView>
      <ScrollTrack>
        <ScrollButton aria-label="Scroll up"><Caret dir="up" /></ScrollButton>
        <ScrollThumb $grow={296} />
        <ScrollGap $grow={90} />
        <ScrollButton aria-label="Scroll down"><Caret /></ScrollButton>
      </ScrollTrack>
      <ScrollTrack $horizontal>
        <ScrollButton aria-label="Scroll left"><Caret dir="left" /></ScrollButton>
        <ScrollThumb $grow={1} />
        <ScrollButton aria-label="Scroll right"><Caret dir="right" /></ScrollButton>
      </ScrollTrack>
    </TreeBox>
    <TreeTools>
      <Grip />
      <Tool aria-label="Add"><Small name="add" /></Tool>
      <ToolDivider />
      <Tool $w={39} aria-label="Rename"><Small name="rename" /></Tool>
      <Tool aria-label="Copy"><Small name="copy" /></Tool>
      <ToolDivider />
      <Tool $w={39} aria-label="Import"><Small name="importDoc" /></Tool>
      <Tool $w={39} aria-label="Import all"><Small name="importAll" /><Caret /></Tool>
      <Tool $w={39} aria-label="Swap"><Small name="swap" /></Tool>
      <Tool $w={39} aria-label="Pick"><Small name="pick" /></Tool>
      <ToolDivider />
      <Tool $w={36} aria-label="Duplicate"><Small name="duplicate" /></Tool>
      <Tool $w={16} aria-label="More"><Caret /></Tool>
    </TreeTools>
    <NavList>
      {nav.map(([icon, label], i) => (
        <NavItem key={label} $active={i === 0}><Small name={icon} />{label}</NavItem>
      ))}
    </NavList>
  </LeftPanel>
);

/* ---------- graphic view ---------- */

const Center = styled.main`
  display: flex;
  flex-direction: column;
  flex: 1;
  min-width: 0;
`;
const ViewFrame = styled.section`
  display: flex;
  flex-direction: column;
  flex: 1;
  min-height: 0;
  padding: 0 6px;
  border: 5px solid ${c.frame};
  background: ${c.panel};
`;
const ViewTab = styled.button`
  align-self: flex-start;
  height: 33px;
  padding: 0 14px 2px 13px;
  border: 1px solid ${c.line};
  border-bottom: 0;
`;
const Canvas = styled.div`
  position: relative;
  flex: 1;
  border: 2px solid #888;
  border-bottom: 0;
  border-left-width: 1px;
  background: linear-gradient(#dcdcdc, #959595);
`;
const ViewTools = styled.div`
  position: absolute;
  top: 10px;
  right: 9px;
  display: flex;
  align-items: center;
  height: 56px;
  padding: 0 1px;
  border-radius: 5px;
  background: #5a5a5a;
`;
const ViewTool = styled.button`
  display: grid;
  place-items: center;
  width: 55px;
  height: 50px;
  color: #fff;
`;
const ViewDivider = styled.span`
  width: 2px;
  height: 40px;
  margin: 0 4px 0 6px;
  background: #a5a5a5;
`;
const AxisMark = styled.div`
  position: absolute;
  left: 50px;
  bottom: 49px;
`;

const GraphicView = () => (
  <ViewFrame>
    <ViewTab>Graphic view</ViewTab>
    <Canvas>
      <ViewTools>
        <ViewTool aria-label="Previous zoom">
          <Svg size={36} box={36}><path d="M3 2v9h10M4 11A13.5 13.5 0 1 1 2.5 19M25 25l10 10" strokeWidth="2.4" /></Svg>
        </ViewTool>
        <ViewTool aria-label="Zoom">
          <Svg size={36} box={36}><circle cx="15" cy="16" r="13" strokeWidth="2.4" /><path d="M24 25l10 10" strokeWidth="2.4" /></Svg>
        </ViewTool>
        <ViewTool aria-label="Zoom extents">
          <Svg size={36} box={36}><path d="M2 12V2h10M2 2l11 11M24 2h10v10M34 2 23 13M2 24v10h10M2 34l11-11M34 24v10H24M34 34 23 23" strokeWidth="2.6" /></Svg>
        </ViewTool>
        <ViewDivider />
        <ViewTool aria-label="3D view">
          <Svg size={40} box={40}>
            <path d="M20 1 36 10v20L20 39 4 30V10zM4 10l16 9 16-9M20 19v20" strokeWidth="1.6" stroke="#e6e6e6" />
            <text x="0" y="0" transform="matrix(1 .5 0 1 8 28)" fontSize="15" fontWeight={700} fill="#fff" stroke="none">3</text>
            <text x="0" y="0" transform="matrix(1 -.5 0 1 23 34)" fontSize="15" fontWeight={700} fill="#fff" stroke="none">D</text>
          </Svg>
        </ViewTool>
      </ViewTools>
      <AxisMark>
        <svg width="66" height="74" viewBox="0 0 66 74" fill="none" role="img" aria-label="Axes">
          <path d="M9 20v44M9 67h32" stroke="#555" strokeWidth="4" />
          <path d="M9 19 3 40h12zM57 67 37 61v12z" fill="#505050" />
          <path d="M9 22v18M38 66h14" stroke="#888" />
          <circle cx="9" cy="67" r="6" fill="#f24a0c" />
          <path d="M5 67l4 5 1-5z" fill="#7a2400" />
          <g fill="#3a3a3a" fontSize="16" fontWeight={500} textAnchor="middle">
            <text x="16" y="15">Y</text><text x="16" y="61">Z</text><text x="62" y="61">X</text>
          </g>
        </svg>
      </AxisMark>
    </Canvas>
  </ViewFrame>
);

const CommandBar = styled.div`
  display: flex;
  align-items: center;
  height: 30px;
  flex: none;
  margin: 0 9px 4px;
  padding: 0 8px 3px 0;
  background: ${c.ribbon};
  border: 1px solid #d8d8d8;
  border-top: 0;
`;
const CommandLabel = styled.label`
  display: flex;
  align-items: center;
  gap: 4px;
  padding: 0 8px 0 9px;
  font-weight: 500;
`;
const CommandInput = styled.input`
  flex: 1;
  height: 25px;
  border: 1px solid #b4b4b4;
  background: #fff;
`;

/* ---------- properties ---------- */

const RightPanel = styled.aside`
  display: flex;
  flex-direction: column;
  width: 375px;
  flex: none;
  padding: 0 5px 9px 2px;
  border-top: 5px double #dedede;
`;
const PropHead = styled(PanelHead)`
  height: 39px;
  padding: 0 10px 7px 9px;
`;
const SelectionBar = styled.div`
  display: flex;
  align-items: center;
  height: 33px;
  flex: none;
  margin-bottom: 5px;
  background: ${c.ribbon};
  font-weight: 500;
`;
const SelectionText = styled.span`
  flex: 1;
`;
const PropTable = styled.table`
  width: 100%;
  height: 500px;
  flex: none;
  border-collapse: separate;
  border-spacing: 0;
  table-layout: fixed;
`;
const GroupHead = styled.th`
  height: 31px;
  padding: 0 5px 0 19px;
  background: #dedede;
  text-align: left;
  font-weight: 500;
`;
const GroupHeadLine = styled.div`
  display: flex;
  align-items: center;
  justify-content: space-between;
`;
const PropName = styled.th`
  height: 31px;
  padding: 0 0 0 18px;
  background: #fff;
  border-bottom: 1px solid ${c.line};
  border-right: 1px solid ${c.line};
  text-align: left;
  font-weight: 400;
  white-space: nowrap;
`;
const PropValue = styled.td`
  padding: 0 0 0 5px;
  background: #fff;
  border-bottom: 1px solid ${c.line};
  font-weight: 500;
`;
const Rail = styled.td`
  padding: 0;
  background: #dedede;
`;
const Swatch = styled.span`
  display: inline-block;
  width: 28px;
  height: 13px;
  margin: 0 5px 0 2px;
  vertical-align: -1px;
  background: #ff0000;
  border: 1px solid #555;
`;
const PropFill = styled.div`
  flex: 1;
  background: #a3a3a3;
`;

const propGroups: [string, [string, string][]][] = [
  ['Properties', [
    ['Layer', 'Default'],
    ['Color mode', 'By Layer'],
    ['Color', 'Red'],
    ['Linetype mode', 'By Layer'],
    ['Linetype', 'CONTINUOUS'],
    ['Line weight mode', 'By Layer'],
    ['Line weight', '1'],
    ['Text style', ''],
    ['Dimension Style', ''],
  ]],
  ['Survey properties', [
    ['Survey code', ''],
    ['Label point style', 'Point-Style1'],
    ['Label object style', 'Object-Style1'],
    ['Label polygon style', 'Polygon-Style1'],
    ['Label GIS Data style', 'GISData-Style1'],
  ]],
];

const PropertiesPanel = () => (
  <RightPanel>
    <PropHead>
      Properties
      <PlainButton aria-label="Pin panel"><Small name="pin" /></PlainButton>
    </PropHead>
    <SelectionBar>
      <Grip />
      <SelectionText>No selection</SelectionText>
      <ToolDivider />
      <Tool $w={50} aria-label="Select objects"><Small name="selectMany" /></Tool>
      <Tool $w={30} aria-label="Selection options"><Caret /></Tool>
      <ToolDivider />
      <Tool $w={44} aria-label="Quick select"><Small name="quickSelect" /></Tool>
    </SelectionBar>
    <PropTable>
      <colgroup><col width="16" /><col width="168" /><col /></colgroup>
      {propGroups.map(([name, rows]) => (
        <tbody key={name}>
          <tr>
            <GroupHead colSpan={3} scope="rowgroup">
              <GroupHeadLine>
                {name}
                <PlainButton aria-label={`Collapse ${name}`}><Chevron size={18} dir="up" /></PlainButton>
              </GroupHeadLine>
            </GroupHead>
          </tr>
          {rows.map(([k, v]) => (
            <tr key={k}>
              <Rail />
              <PropName scope="row">{k}</PropName>
              <PropValue>{k === 'Color' && <Swatch />}{v}</PropValue>
            </tr>
          ))}
        </tbody>
      ))}
    </PropTable>
    <PropFill />
  </RightPanel>
);

/* ---------- status bar ---------- */

const StatusBar = styled.footer`
  display: flex;
  align-items: center;
  height: 25px;
  flex: none;
  padding-top: 2px;
  background: ${c.ribbon};
  border-top: 1px solid ${c.line};
  white-space: nowrap;
`;
const Coords = styled.div`
  display: flex;
  align-items: center;
  gap: 6px;
  width: 372px;
  padding-left: 10px;
`;
const ToggleCell = styled.div`
  padding: 0 3px;
  & + & { border-left: 1px solid ${c.line}; }
`;
const Toggle = styled.button<{ $on?: boolean }>`
  height: 24px;
  padding: 0 10px;
  background: ${p => (p.$on ? '#b9b9b7' : 'none')};
`;
const StatusRight = styled.div`
  display: flex;
  align-items: center;
  margin-left: auto;
`;
const StatusItem = styled.div<{ $pad: string }>`
  display: flex;
  align-items: center;
  gap: 6px;
  height: 24px;
  padding: ${p => p.$pad};
  & + & { border-left: 1px solid ${c.line}; }
`;
const Step = styled.button`
  width: 14px;
  color: #777;
  font-size: 20px;
  font-weight: 700;
  line-height: 20px;
`;
const Slider = styled.input`
  appearance: none;
  width: 144px;
  height: 16px;
  margin: 0;
  background: linear-gradient(90deg, ${c.accent} 64%, #b0b0b0 64%) center / 100% 2px no-repeat;
  &::-webkit-slider-thumb {
    appearance: none;
    width: 7px;
    height: 16px;
    background: #6b6b6b;
  }
`;

const toggles: [string, boolean][] = [
  ['ORTHO', true], ['POLAR', false], ['SNAP', false], ['GRID', false],
  ['OSNAP', true], ['OSTRACK', false], ['AUTOLIST', true], ['PROMPT', true],
];

const tabs = ['Home', 'View', 'Draw', 'Edit', 'Survey', 'Surfaces', 'Design 3D', 'Imaging', 'Alignments & x-sections', 'Cadastral', 'Cloud', 'Output'];

export default function App() {
  return (
    <Shell>
      <GlobalStyle />
      <TitleBar>
        <QuickBar>
          <QuickButton aria-label="Application menu"><Small name="logo" size={18} /></QuickButton>
          <QuickButton aria-label="New"><Small name="newDoc" /></QuickButton>
          <QuickButton aria-label="Save"><Small name="save" /></QuickButton>
          <QuickDivider />
          <QuickButton $active aria-label="Working mode"><Small name="working" /></QuickButton>
          <QuickDivider />
          <QuickButton aria-label="Measure"><Small name="measure" size={18} /></QuickButton>
          <QuickButton aria-label="Query"><Small name="query" size={18} /></QuickButton>
          <QuickDivider />
          <QuickButton aria-label="Undo"><Small name="undo" /></QuickButton>
          <QuickButton $narrow aria-label="Undo list"><Chevron size={9} /></QuickButton>
          <QuickButton aria-label="Redo"><Small name="redo" /></QuickButton>
          <QuickButton $narrow $dim aria-label="Redo list"><Chevron size={9} /></QuickButton>
          <QuickDivider />
          <QuickButton aria-label="Help"><Small name="help" /></QuickButton>
        </QuickBar>
        <Title>Document83 - X-PAD Office Fusion [DEMO VERSION]</Title>
        <WindowButtons>
          <WindowButton aria-label="Full screen"><Small name="focus" /></WindowButton>
          <WindowButton aria-label="Minimize"><Small name="minimize" /></WindowButton>
          <WindowButton aria-label="Restore"><Small name="restore" /></WindowButton>
          <WindowButton aria-label="Close"><Small name="close" /></WindowButton>
        </WindowButtons>
      </TitleBar>
      <TabBar>
        <TabList>
          <FileTab>File</FileTab>
          {tabs.map(t => <Tab key={t} $active={t === 'Draw'}>{t}</Tab>)}
        </TabList>
        <SearchBox>
          <Magnifier />
          <SearchInput placeholder="Search" aria-label="Search" />
        </SearchBox>
        <Account><AccountAlert>!</AccountAlert>X-PAD 365<Chevron size={9} /></Account>
      </TabBar>
      <Ribbon />
      <Body>
        <ProjectPanel />
        <Center>
          <GraphicView />
          <CommandBar>
            <Grip />
            <CommandLabel htmlFor="command"><Small name="keyboard" />Command</CommandLabel>
            <CommandInput id="command" />
          </CommandBar>
        </Center>
        <PropertiesPanel />
      </Body>
      <StatusBar>
        <Coords><Small name="axes" />X -1115.061m, Y 482.295m, Z 0.000m</Coords>
        {toggles.map(([t, on]) => <ToggleCell key={t}><Toggle $on={on} aria-pressed={on}>{t}</Toggle></ToggleCell>)}
        <ToggleCell><Tool $w={38} aria-label="Settings"><Small name="gear" /></Tool></ToggleCell>
        <StatusRight>
          <StatusItem $pad="0 12px 0 0"><Small name="timer" />Rendering time: 1 msec</StatusItem>
          <StatusItem $pad="0 10px 0 8px">
            <label htmlFor="scale">Scale 1: 1000</label>
            <Step aria-label="Decrease scale">−</Step>
            <Slider id="scale" type="range" min={0} max={100} defaultValue={64} />
            <Step aria-label="Increase scale">+</Step>
          </StatusItem>
          <StatusItem $pad="0 13px">Meters (m)</StatusItem>
          <StatusItem $pad="0 7px 0 13px">GON</StatusItem>
        </StatusRight>
      </StatusBar>
    </Shell>
  );
}
